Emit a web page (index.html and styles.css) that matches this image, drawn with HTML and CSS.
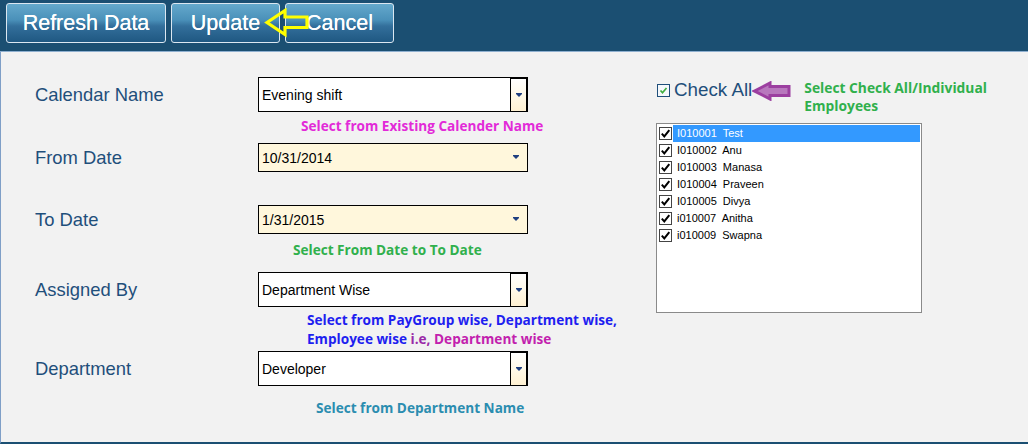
FILE: index.html
```
<!DOCTYPE html>
<html>
<head>
<meta charset="utf-8">
<link rel="stylesheet" href="styles.css">
</head>
<body>
<div class="app">
  <header class="toolbar">
    <button class="tbtn tbtn-wide">Refresh Data</button>
    <button class="tbtn">Update</button>
    <button class="tbtn">Cancel</button>
    <svg class="yellow-arrow" width="46" height="30" viewBox="0 0 46 30">
      <path d="M3 14.5 L21 2.5 L21 9 L43 9 L43 19.5 L21 19.5 L21 26.5 Z" fill="none" stroke="#ffff00" stroke-width="3.2" stroke-linejoin="miter"/>
    </svg>
  </header>
  <main class="panel">
    <section class="form">
      <div class="row row-1">
        <label class="lbl">Calendar Name</label>
        <div class="combo">
          <span class="val">Evening shift</span>
          <span class="combo-btn"><span class="tri"></span></span>
        </div>
      </div>
      <div class="hint hint-1 c-magenta">Select from Existing Calender Name</div>
      <div class="row row-2">
        <label class="lbl">From Date</label>
        <div class="date">
          <span class="val">10/31/2014</span>
          <span class="tri tri-date"></span>
        </div>
      </div>
      <div class="row row-3">
        <label class="lbl">To Date</label>
        <div class="date">
          <span class="val">1/31/2015</span>
          <span class="tri tri-date"></span>
        </div>
      </div>
      <div class="hint hint-2 c-green">Select From Date to To Date</div>
      <div class="row row-4">
        <label class="lbl">Assigned By</label>
        <div class="combo">
          <span class="val">Department Wise</span>
          <span class="combo-btn"><span class="tri"></span></span>
        </div>
      </div>
      <div class="hint hint-3"><span class="c-blue">Select from PayGroup wise, Department wise,</span><br><span class="c-blue">Employee wise</span> <span class="c-purple">i.e,</span> <span class="c-plum">Department wise</span></div>
      <div class="row row-5">
        <label class="lbl">Department</label>
        <div class="combo">
          <span class="val">Developer</span>
          <span class="combo-btn"><span class="tri"></span></span>
        </div>
      </div>
      <div class="hint hint-4 c-teal">Select from Department Name</div>
    </section>
    <section class="emp">
      <div class="emp-top">
        <div class="checkall">
          <span class="cb-all">
            <svg width="11" height="11" viewBox="0 0 11 11"><path d="M2.5 5.5 L4.5 7.8 L8.5 3" fill="none" stroke="#3fae3f" stroke-width="1.7"/></svg>
          </span>
          <span class="checkall-text">Check All</span>
        </div>
        <svg class="purple-arrow" width="40" height="20" viewBox="0 0 40 20">
          <path d="M2.5 10 L18 2 L18 5.5 L37 5.5 L37 14.5 L18 14.5 L18 18 Z" fill="#b878bd" stroke="#9c3fa0" stroke-width="3" stroke-linejoin="miter"/>
        </svg>
        <div class="hint hint-emp c-green">Select Check All/Individual<br>Employees</div>
      </div>
      <ul class="list">
        <li class="item"><span class="cb"><svg width="11" height="11" viewBox="0 0 11 11"><path d="M1.8 5.6 L4.3 8.4 L9.3 2.2" fill="none" stroke="#000" stroke-width="2"/></svg></span><span class="itxt sel">I010001  Test</span></li>
        <li class="item"><span class="cb"><svg width="11" height="11" viewBox="0 0 11 11"><path d="M1.8 5.6 L4.3 8.4 L9.3 2.2" fill="none" stroke="#000" stroke-width="2"/></svg></span><span class="itxt">I010002  Anu</span></li>
        <li class="item"><span class="cb"><svg width="11" height="11" viewBox="0 0 11 11"><path d="M1.8 5.6 L4.3 8.4 L9.3 2.2" fill="none" stroke="#000" stroke-width="2"/></svg></span><span class="itxt">I010003  Manasa</span></li>
        <li class="item"><span class="cb"><svg width="11" height="11" viewBox="0 0 11 11"><path d="M1.8 5.6 L4.3 8.4 L9.3 2.2" fill="none" stroke="#000" stroke-width="2"/></svg></span><span class="itxt">I010004  Praveen</span></li>
        <li class="item"><span class="cb"><svg width="11" height="11" viewBox="0 0 11 11"><path d="M1.8 5.6 L4.3 8.4 L9.3 2.2" fill="none" stroke="#000" stroke-width="2"/></svg></span><span class="itxt">I010005  Divya</span></li>
        <li class="item"><span class="cb"><svg width="11" height="11" viewBox="0 0 11 11"><path d="M1.8 5.6 L4.3 8.4 L9.3 2.2" fill="none" stroke="#000" stroke-width="2"/></svg></span><span class="itxt">i010007  Anitha</span></li>
        <li class="item"><span class="cb"><svg width="11" height="11" viewBox="0 0 11 11"><path d="M1.8 5.6 L4.3 8.4 L9.3 2.2" fill="none" stroke="#000" stroke-width="2"/></svg></span><span class="itxt">i010009  Swapna</span></li>
      </ul>
    </section>
  </main>
</div>
</body>
</html>
```

FILE: styles.css
```
* { box-sizing: border-box; }
html, body { margin: 0; padding: 0; }
body {
  width: 1028px;
  height: 444px;
  overflow: hidden;
  font-family: "Liberation Sans", Arial, sans-serif;
  background: #f2f2f2;
}
.app { width: 1028px; }

/* toolbar */
.toolbar {
  position: relative;
  height: 52px;
  background: #1b4f72;
  border-bottom: 1px solid #8fb0d0;
  display: flex;
  gap: 5px;
  padding: 3px 0 0 6px;
}
.tbtn {
  width: 109px;
  height: 40px;
  padding: 0;
  border: 1px solid #dbe7f1;
  border-radius: 3px;
  background: linear-gradient(to bottom, #64a9cc 0%, #4a90b9 42%, #336f9b 58%, #1f5882 100%);
  color: #ffffff;
  font-family: "Liberation Sans", Arial, sans-serif;
  font-size: 21.5px;
  line-height: 37px;
  text-align: center;
  text-shadow: 0 0 0.4px #ffffff;
}
.tbtn-wide { width: 160px; }
.yellow-arrow {
  position: absolute;
  left: 264px;
  top: 8px;
}

/* panel */
.panel {
  display: flex;
  height: 392px;
  border-left: 1px solid #7f9fc7;
  border-bottom: 2px solid #1b4f72;
  background: #f2f2f2;
}
.form {
  flex: 0 0 655px;
  padding: 25px 0 0 34px;
  display: flex;
  flex-direction: column;
}
.row {
  display: flex;
  align-items: center;
}
.lbl {
  width: 223px;
  font-size: 18.4px;
  color: #1f4f7b;
}
.row-2 { margin-top: 9px; }
.row-3 { margin-top: 33px; }
.row-4 { margin-top: 14px; }
.row-5 { margin-top: 3px; }

.combo {
  position: relative;
  width: 270px;
  height: 35px;
  border: 1px solid #000;
  background: #fff;
  display: flex;
  align-items: center;
}
.date {
  width: 270px;
  height: 29px;
  border: 1px solid #000;
  background: #fff7dc;
  display: flex;
  align-items: center;
}
.val {
  flex: 1;
  padding-left: 3px;
  font-size: 14px;
  color: #000;
}
.combo-btn {
  align-self: stretch;
  width: 18px;
  margin: 0 -1px 0 0;
  border-left: 1px solid #000;
  border-right: 2px solid #000;
  border-top: 1px solid #000;
  background: linear-gradient(to bottom, #ffffff 0%, #fff9e8 50%, #fff1d2 100%);
  display: flex;
  align-items: center;
  justify-content: center;
}
.tri {
  width: 0;
  height: 0;
  border-left: 3px solid transparent;
  border-right: 3px solid transparent;
  border-top: 3px solid #1f3f80;
  position: relative;
}
.tri::before {
  content: "";
  position: absolute;
  left: -3px;
  top: -4px;
  width: 6px;
  height: 1px;
  background: #1f3f80;
}
.tri-date { margin-right: 8px; }

/* hints */
.hint {
  font-family: "Open Sans", "Noto Sans", sans-serif;
  font-weight: 700;
  font-size: 13.6px;
  line-height: 16px;
  white-space: nowrap;
}
.hint-1 { margin: 6px 0 0 266px; }
.hint-2 { margin: 8px 0 0 258px; }
.hint-3 { margin: 3px 0 0 272px; line-height: 19px; }
.hint-4 { margin: 14px 0 0 281px; }
.c-magenta { color: #e22ad8; }
.c-green { color: #30b04c; }
.c-blue { color: #1e1ef0; }
.c-purple { color: #9a2aa8; }
.c-plum { color: #c21fae; }
.c-teal { color: #2b8db0; }

/* employees */
.emp {
  width: 266px;
  padding-top: 27px;
}
.emp-top {
  display: flex;
  align-items: flex-start;
  white-space: nowrap;
}
.checkall {
  display: flex;
  align-items: center;
  margin: 2px 0 0 1px;
  height: 18px;
}
.cb-all {
  width: 13px;
  height: 13px;
  border: 1px solid #1f4f7b;
  background: #f5f8fb;
  display: flex;
  align-items: center;
  justify-content: center;
  margin-right: 4px;
}
.checkall-text {
  font-size: 18.8px;
  color: #1f4f7b;
}
.purple-arrow {
  margin: 2px 0 0 0;
  flex: none;
}
.hint-emp {
  margin-left: 12px;
  line-height: 18px;
  font-size: 13.8px;
}
.list {
  list-style: none;
  margin: 8px 0 0 0;
  padding: 1px 1px 0 2px;
  width: 266px;
  height: 190px;
  border: 1px solid #8a8a8a;
  background: #fff;
}
.item {
  display: flex;
  align-items: center;
  height: 17px;
}
.cb {
  width: 13px;
  height: 13px;
  border: 1px solid #444;
  background: #fff;
  display: flex;
  align-items: center;
  justify-content: center;
  margin-right: 1px;
}
.itxt {
  flex: 1;
  height: 17px;
  line-height: 17px;
  padding-left: 4px;
  font-family: "Liberation Sans", Arial, sans-serif;
  font-size: 11px;
  color: #000;
  white-space: pre;
}
.sel {
  background: #3399ff;
  color: #fff;
}
```
